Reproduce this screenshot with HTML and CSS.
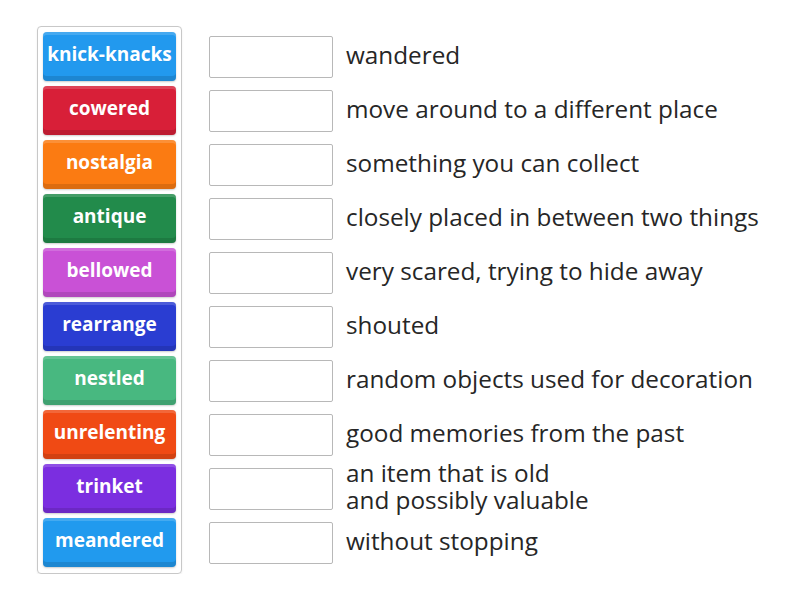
FILE: index.html
```html
<!DOCTYPE html>
<html>
<head>
<meta charset="utf-8">
<link rel="stylesheet" href="styles.css">
</head>
<body>
<div class="activity">
  <div class="bank">
    <div class="tile t-blue">knick-knacks</div>
    <div class="tile t-red">cowered</div>
    <div class="tile t-orange">nostalgia</div>
    <div class="tile t-green">antique</div>
    <div class="tile t-magenta">bellowed</div>
    <div class="tile t-navy">rearrange</div>
    <div class="tile t-mint">nestled</div>
    <div class="tile t-vermilion">unrelenting</div>
    <div class="tile t-purple">trinket</div>
    <div class="tile t-sky">meandered</div>
  </div>
  <div class="targets">
    <div class="row"><div class="slot"></div><div class="def">wandered</div></div>
    <div class="row"><div class="slot"></div><div class="def">move around to a different place</div></div>
    <div class="row"><div class="slot"></div><div class="def">something you can collect</div></div>
    <div class="row"><div class="slot"></div><div class="def">closely placed in between two things</div></div>
    <div class="row"><div class="slot"></div><div class="def">very scared, trying to hide away</div></div>
    <div class="row"><div class="slot"></div><div class="def">shouted</div></div>
    <div class="row"><div class="slot"></div><div class="def">random objects used for decoration</div></div>
    <div class="row"><div class="slot"></div><div class="def">good memories from the past</div></div>
    <div class="row"><div class="slot"></div><div class="def">an item that is old<br>and possibly valuable</div></div>
    <div class="row"><div class="slot"></div><div class="def">without stopping</div></div>
  </div>
</div>
</body>
</html>
```
FILE: styles.css
```css
html, body {
  margin: 0;
  padding: 0;
  background: #ffffff;
}
body {
  font-family: "Open Sans", "Liberation Sans", sans-serif;
}
.activity {
  display: flex;
  align-items: flex-start;
  padding: 26px 0 0 37px;
}
.bank {
  display: flex;
  flex-direction: column;
  gap: 5px;
  padding: 5px 5px 6px 5px;
  border: 1px solid #c8c8c8;
  border-radius: 4px;
  box-shadow: 0 1px 2px rgba(0,0,0,0.08);
}
.tile {
  width: 133px;
  height: 49px;
  box-sizing: border-box;
  border-radius: 4px;
  color: #fff;
  font-weight: 700;
  font-size: 19px;
  display: flex;
  align-items: center;
  justify-content: center;
  box-shadow: inset 0 -5px 0 rgba(0,0,0,0.12), inset 0 3px 0 rgba(255,255,255,0.16), 0 1px 2px rgba(0,0,0,0.2);
  text-shadow: 0 1px 0 rgba(0,0,0,0.05);
  padding-bottom: 5px;
}
.t-blue { background: #2299ee; }
.t-red { background: #d81f38; }
.t-orange { background: #fb7b12; }
.t-green { background: #228b4b; }
.t-magenta { background: #c951d6; }
.t-navy { background: #2a3dd2; }
.t-mint { background: #48b880; }
.t-vermilion { background: #f04a14; }
.t-purple { background: #7b2ee0; }
.t-sky { background: #219aee; }
.targets {
  display: flex;
  flex-direction: column;
  gap: 5px;
  padding-top: 6px;
  margin-left: 27px;
}
.row {
  height: 49px;
  display: flex;
  align-items: center;
}
.slot {
  width: 124px;
  height: 42px;
  box-sizing: border-box;
  border: 1px solid #b8b8b8;
  border-radius: 2px;
  background: #fff;
}
.def {
  margin-left: 13px;
  margin-bottom: 5px;
  font-size: 24.3px;
  line-height: 27px;
  color: #262626;
}
```
